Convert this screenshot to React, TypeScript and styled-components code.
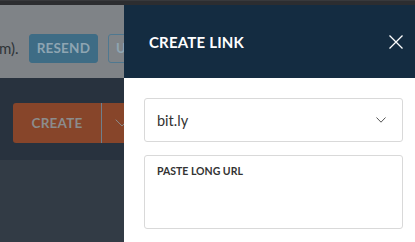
import styled, { createGlobalStyle } from 'styled-components';

const GlobalStyle = createGlobalStyle`
  html, body {
    margin: 0;
    padding: 0;
    background: #323b45;
  }
  * {
    box-sizing: border-box;
  }
`;

const Page = styled.div`
  position: relative;
  width: 415px;
  height: 242px;
  overflow: hidden;
  font-family: Lato, 'Open Sans', sans-serif;
  background: #323b45;
  display: flex;
  flex-direction: column;
`;

const TopStrip = styled.div`
  height: 5px;
  flex-shrink: 0;
  background: #2c2d30;
  border-top: 1px solid #38393c;
`;

const Banner = styled.div`
  height: 73px;
  background: #7f8387;
  display: flex;
  align-items: center;
  gap: 10px;
  padding-top: 13px;
  margin-left: -1px;
`;

const BannerText = styled.span`
  font-size: 15px;
  color: #2e3337;
  white-space: nowrap;
`;

const GhostButton = styled.button<{ $outline?: boolean }>`
  height: 29px;
  padding: 0 7px;
  border-radius: 3px;
  border: 1px solid ${(p) => (p.$outline ? '#4f7890' : '#3e6c85')};
  background: ${(p) => (p.$outline ? 'transparent' : '#3e6c85')};
  color: #8ea5b2;
  font-family: inherit;
  font-weight: 700;
  font-size: 13.5px;
  letter-spacing: 0.2px;
  white-space: nowrap;
`;

const ActionBar = styled.div`
  height: 82px;
  background: #28323e;
  display: flex;
  align-items: center;
  padding: 7px 0 0 13px;
`;

const SplitButton = styled.div`
  display: flex;
  height: 40px;
  background: #87452a;
  border-radius: 3px;
  overflow: hidden;
`;

const SplitMain = styled.div`
  width: 89px;
  display: flex;
  align-items: center;
  justify-content: center;
  color: #8c8c8c;
  font-weight: 700;
  font-size: 13.5px;
  letter-spacing: 0.2px;
  border-right: 1px solid #6f7f8c;
`;

const SplitToggle = styled.div`
  width: 40px;
  display: flex;
  align-items: center;
  justify-content: center;
  color: #8c8c8c;
`;

const Content = styled.div`
  flex: 1;
  background: #323b45;
`;

const Drawer = styled.aside`
  position: absolute;
  top: 5px;
  left: 124px;
  right: 0;
  bottom: 0;
  background: #ffffff;
  display: flex;
  flex-direction: column;
`;

const DrawerHeader = styled.header`
  height: 73px;
  flex-shrink: 0;
  background: #142c41;
  display: flex;
  align-items: center;
  justify-content: space-between;
  padding: 0 12px 0 25px;
`;

const DrawerTitle = styled.h2`
  margin: 0;
  color: #ffffff;
  font-size: 15px;
  font-weight: 700;
  letter-spacing: 0.2px;
`;

const CloseButton = styled.button`
  width: 14px;
  height: 14px;
  padding: 0;
  border: none;
  background: none;
  display: flex;
  color: #ffffff;
`;

const DrawerBody = styled.div`
  padding: 20px 12px 0 20px;
  display: flex;
  flex-direction: column;
  gap: 13px;
`;

const Select = styled.div`
  height: 44px;
  border: 1px solid #d9d9d9;
  border-radius: 3px;
  display: flex;
  align-items: center;
  justify-content: space-between;
  padding: 0 16px 0 12px;
  font-size: 14.5px;
  color: #333333;
`;

const UrlBox = styled.div`
  height: 74px;
  border: 1px solid #d9d9d9;
  border-radius: 3px;
  padding: 9px 12px;
`;

const UrlLabel = styled.label`
  display: block;
  font-size: 10.5px;
  font-weight: 700;
  color: #333333;
`;

function Chevron({ color, width = 10, height = 6 }: { color: string; width?: number; height?: number }) {
  return (
    <svg width={width} height={height} viewBox="0 0 10 6" fill="none" preserveAspectRatio="none">
      <path d="M0.5 0.5 L5 5.2 L9.5 0.5" stroke={color} strokeWidth="1" vectorEffect="non-scaling-stroke" />
    </svg>
  );
}

export default function App() {
  return (
    <>
      <GlobalStyle />
      <Page>
        <TopStrip />
        <Banner>
          <BannerText>m).</BannerText>
          <GhostButton>RESEND</GhostButton>
          <GhostButton $outline>UNDO</GhostButton>
        </Banner>
        <ActionBar>
          <SplitButton>
            <SplitMain>CREATE</SplitMain>
            <SplitToggle>
              <Chevron color="#8c8c8c" width={14} height={8} />
            </SplitToggle>
          </SplitButton>
        </ActionBar>
        <Content />

        <Drawer>
          <DrawerHeader>
            <DrawerTitle>CREATE LINK</DrawerTitle>
            <CloseButton aria-label="Close">
              <svg width="14" height="14" viewBox="0 0 14 14" fill="none">
                <path d="M0.5 0.5 L13.5 13.5 M13.5 0.5 L0.5 13.5" stroke="currentColor" strokeWidth="1.3" />
              </svg>
            </CloseButton>
          </DrawerHeader>
          <DrawerBody>
            <Select>
              <span>bit.ly</span>
              <Chevron color="#555555" />
            </Select>
            <UrlBox>
              <UrlLabel>PASTE LONG URL</UrlLabel>
            </UrlBox>
          </DrawerBody>
        </Drawer>
      </Page>
    </>
  );
}
